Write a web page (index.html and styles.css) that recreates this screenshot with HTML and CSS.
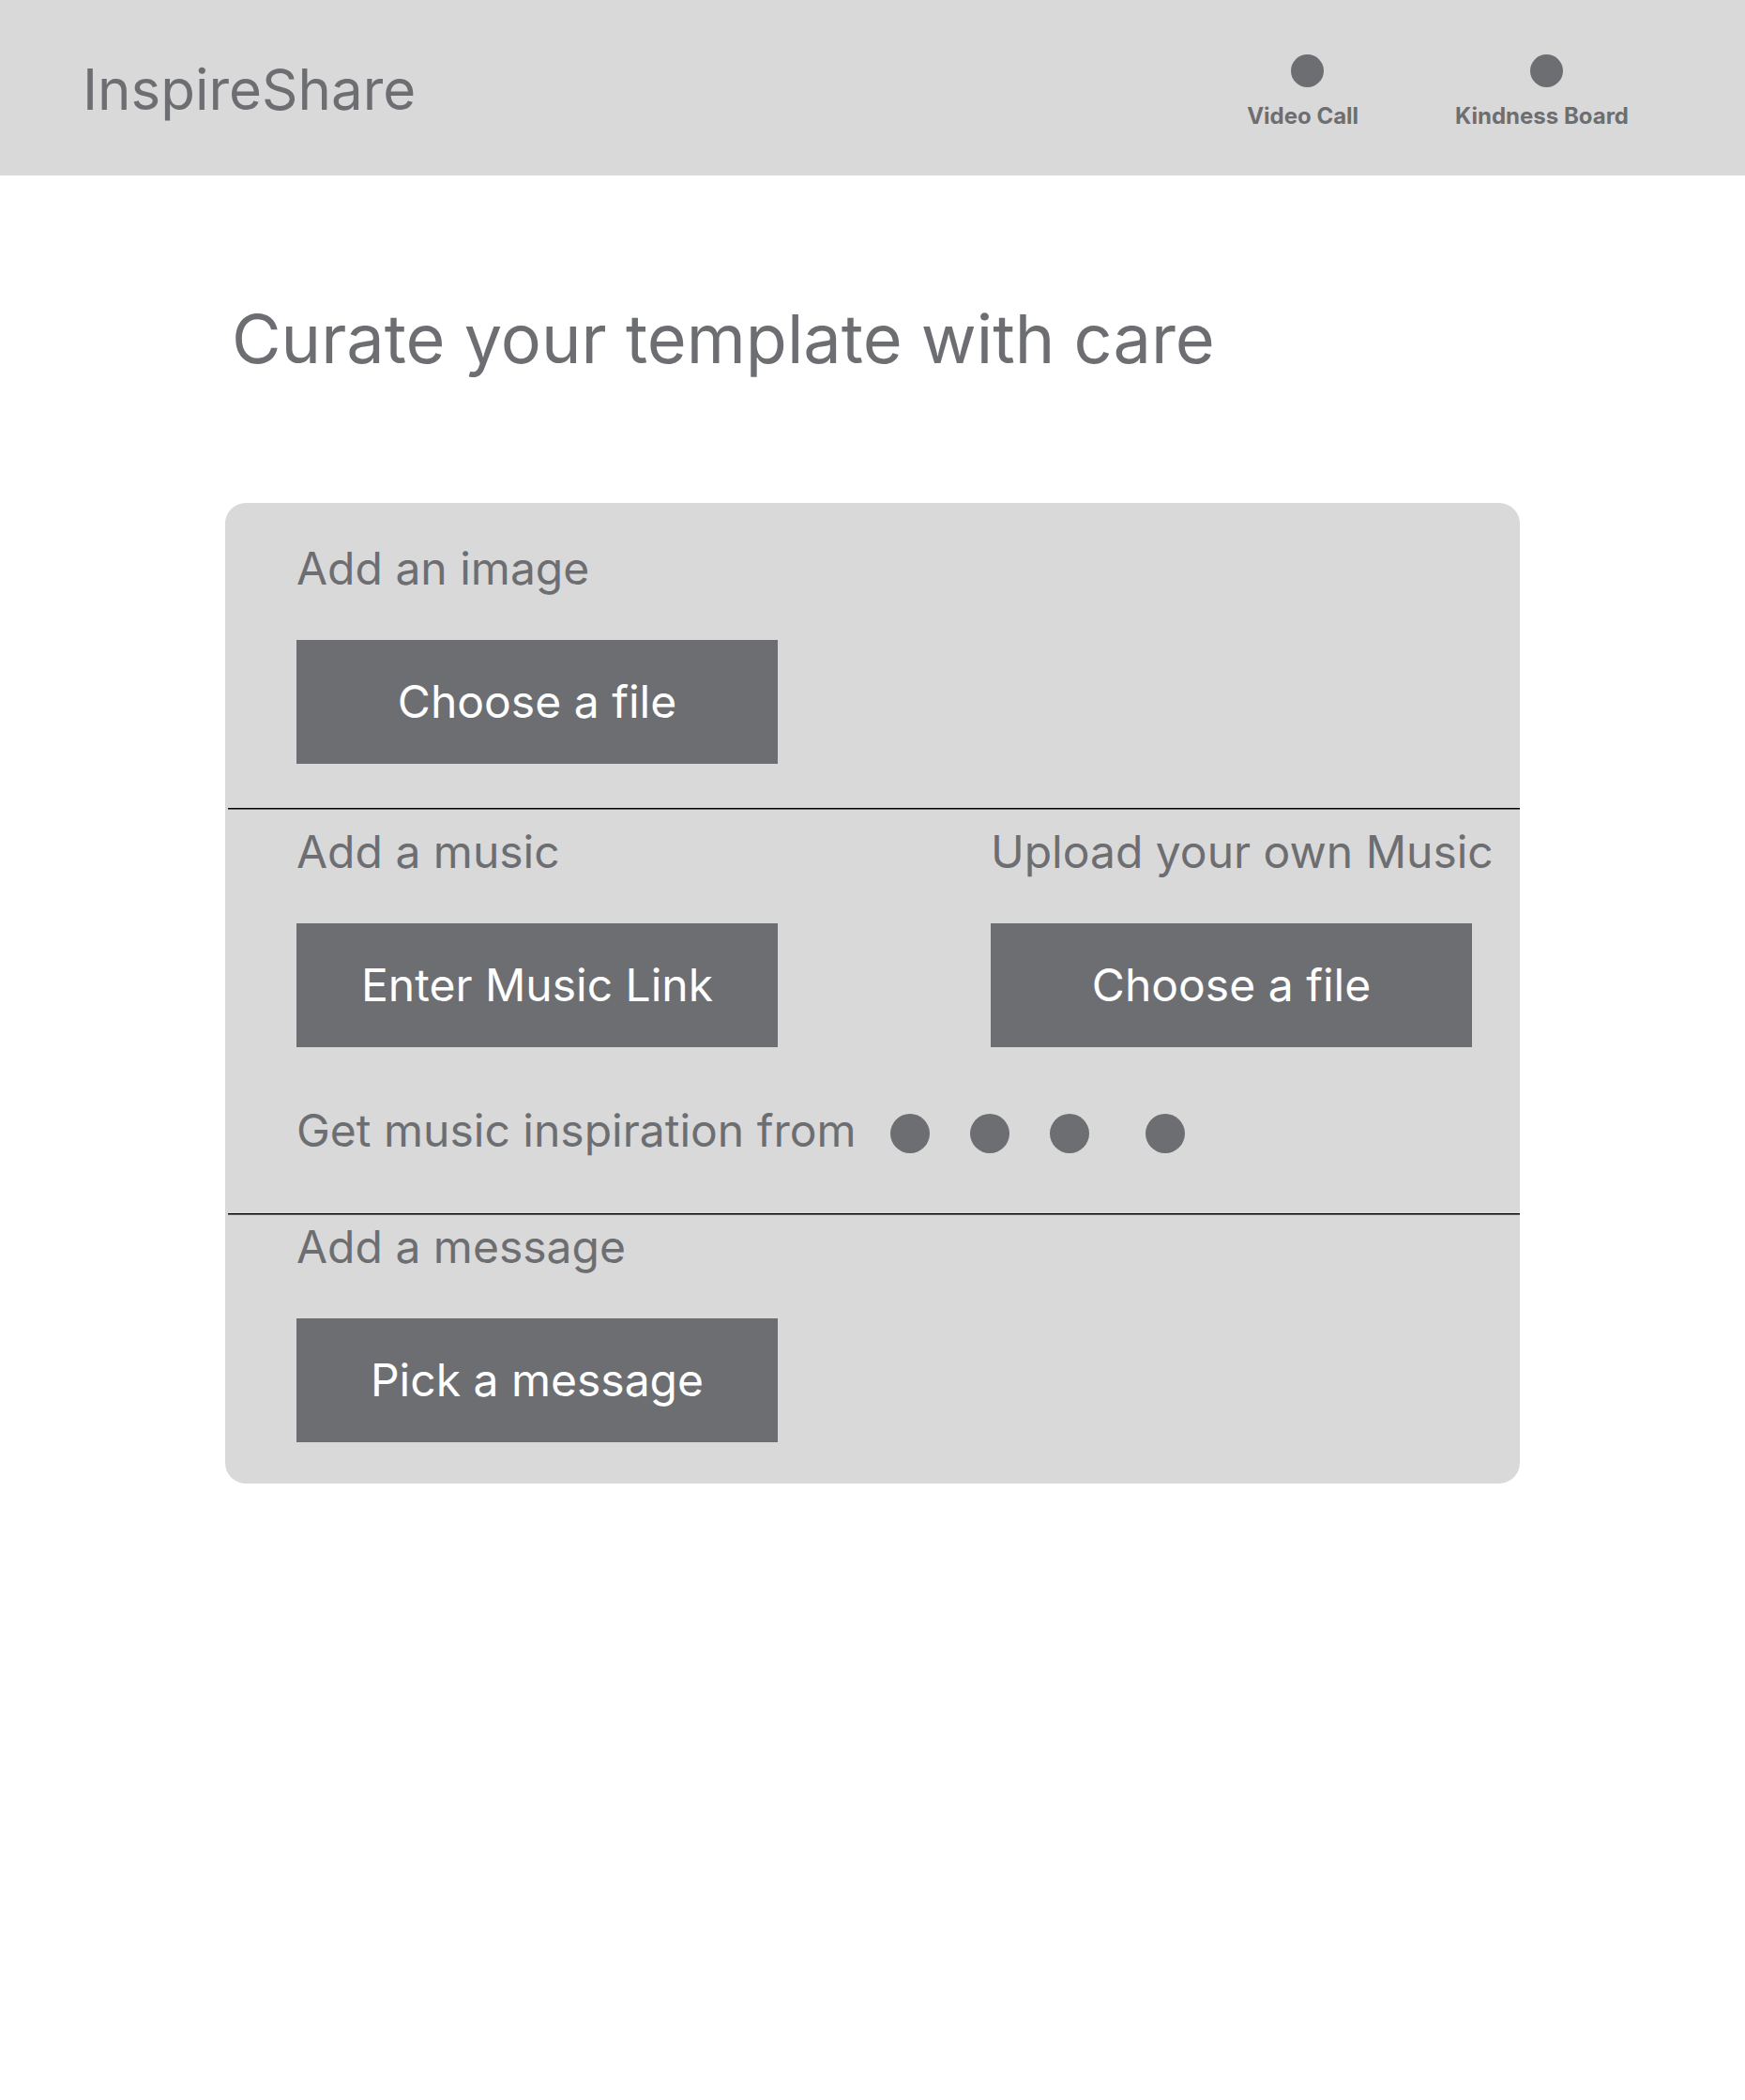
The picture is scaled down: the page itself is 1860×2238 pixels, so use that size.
FILE: index.html
```html
<!DOCTYPE html>
<html lang="en">
<head>
  <meta charset="utf-8">
  <meta name="viewport" content="width=device-width, initial-scale=1">
  <title>InspireShare</title>
  <link rel="stylesheet" href="styles.css">
</head>
<body>
  <header class="site-header">
    <a class="brand" href="#">InspireShare</a>
    <nav class="site-nav">
      <a class="nav-item" href="#"><span class="nav-dot"></span>Video Call</a>
      <a class="nav-item" href="#"><span class="nav-dot"></span>Kindness Board</a>
    </nav>
  </header>

  <main class="page">
    <h1 class="page-title">Curate your template with care</h1>

    <div class="card">
      <section class="section section-image">
        <div class="field">
          <h2 class="label">Add an image</h2>
          <button class="button" type="button">Choose a file</button>
        </div>
      </section>

      <hr class="divider">

      <section class="section section-music">
        <div class="music-fields">
          <div class="field">
            <h2 class="label">Add a music</h2>
            <button class="button" type="button">Enter Music Link</button>
          </div>
          <div class="field">
            <h2 class="label">Upload your own Music</h2>
            <button class="button" type="button">Choose a file</button>
          </div>
        </div>
        <div class="inspiration">
          <p class="label">Get music inspiration from</p>
          <ul class="sources">
            <li class="source"></li>
            <li class="source"></li>
            <li class="source"></li>
            <li class="source"></li>
          </ul>
        </div>
      </section>

      <hr class="divider">

      <section class="section section-message">
        <div class="field">
          <h2 class="label">Add a message</h2>
          <button class="button" type="button">Pick a message</button>
        </div>
      </section>
    </div>
  </main>
</body>
</html>
```
FILE: styles.css
```css
:root {
  --ink: #6d6e72;
  --panel: #d9d9d9;
}

* {
  box-sizing: border-box;
}

body {
  margin: 0;
  background: #fff;
  color: var(--ink);
  font-family: Inter, "Liberation Sans", sans-serif;
}

h1,
h2,
p,
ul {
  margin: 0;
  padding: 0;
  font-weight: 400;
}

a {
  color: inherit;
  text-decoration: none;
}

/* Header */
.site-header {
  display: flex;
  justify-content: space-between;
  align-items: flex-start;
  padding: 58px 124px 49px 88px;
  background: var(--panel);
}

.brand {
  font-size: 60px;
  line-height: 74px;
}

.site-nav {
  display: flex;
  gap: 103px;
}

.nav-item {
  display: flex;
  flex-direction: column;
  align-items: center;
  gap: 16px;
  font-size: 24px;
  font-weight: 700;
  line-height: 29px;
}

.nav-dot {
  width: 35px;
  height: 35px;
  margin-left: 9px;
  border-radius: 50%;
  background: var(--ink);
}

/* Page */
.page {
  padding: 130px 240px;
}

.page-title {
  padding-left: 7px;
  font-size: 72px;
  line-height: 88px;
}

.card {
  margin-top: 131px;
  border-radius: 22px;
  background: var(--panel);
}

.section {
  padding-left: 76px;
}

.section-image {
  padding-top: 41px;
  padding-bottom: 47px;
}

.section-music {
  padding-top: 16px;
  padding-bottom: 59px;
}

.section-message {
  padding-top: 5px;
  padding-bottom: 44px;
}

.divider {
  height: 2px;
  margin: 0 0 0 3px;
  border: 0;
  border-top: 1px solid #000;
  border-bottom: 1px solid #6c6c6c;
}

/* Fields */
.field {
  display: flex;
  flex-direction: column;
  align-items: flex-start;
  gap: 47px;
}

.label {
  font-size: 48px;
  line-height: 58px;
}

.button {
  width: 513px;
  max-width: 100%;
  height: 132px;
  padding: 0;
  border: 0;
  background: var(--ink);
  color: #fff;
  font-family: inherit;
  font-size: 48px;
  line-height: 58px;
  cursor: pointer;
}

.music-fields {
  display: grid;
  grid-template-columns: 1fr 564px;
}

.inspiration {
  display: flex;
  align-items: center;
  gap: 36px;
  margin-top: 60px;
}

.sources {
  display: flex;
  gap: 43px;
  padding-top: 5px;
  list-style: none;
}

.source {
  width: 42px;
  height: 42px;
  border-radius: 50%;
  background: var(--ink);
}

.source:last-child {
  margin-left: 17px;
}

@media (max-width: 1700px) {
  .page {
    padding-left: 5%;
    padding-right: 5%;
  }
}

@media (max-width: 1300px) {
  .site-header,
  .inspiration {
    flex-wrap: wrap;
    gap: 32px;
  }

  .section {
    padding-left: 32px;
    padding-right: 32px;
  }

  .music-fields {
    grid-template-columns: 1fr;
    gap: 32px;
  }
}
```
